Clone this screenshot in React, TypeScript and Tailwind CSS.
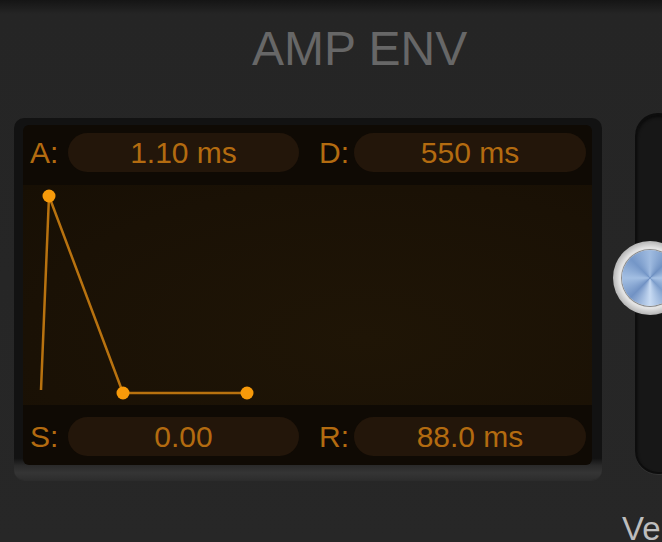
import React from "react";

const orange = "text-[#b36b10]";

function Field({ label, value, labelW, pillW }: { label: string; value: string; labelW: string; pillW: string }) {
  return (
    <div className="flex items-center">
      <div className={`${labelW} ${orange} text-[30px] leading-[30px]`}>{label}</div>
      <div
        className={`${pillW} h-[39px] rounded-full bg-[#23160a] flex items-center justify-center ${orange} text-[30px] leading-[30px]`}
      >
        {value}
      </div>
    </div>
  );
}

function Row({ a, b, cls }: { a: [string, string]; b: [string, string]; cls: string }) {
  return (
    <div className={`flex items-start pl-[7px] ${cls}`}>
      <Field label={a[0]} value={a[1]} labelW="w-[38px]" pillW="w-[231px]" />
      <div className="w-[20px]" />
      <Field label={b[0]} value={b[1]} labelW="w-[35px]" pillW="w-[232px]" />
    </div>
  );
}

function Graph() {
  return (
    <div className="h-[220px] bg-[radial-gradient(ellipse_at_60%_70%,#1f1506_0%,#1a1105_70%,#170f04_100%)]">
      <svg width="569" height="220" viewBox="0 0 569 220">
        <polyline
          points="18,205 26,11 100,208 224,208"
          fill="none"
          stroke="#b8720f"
          strokeWidth="2.5"
          strokeLinejoin="round"
        />
        <circle cx="26" cy="11" r="6.5" fill="#f79a0a" />
        <circle cx="100" cy="208" r="6.5" fill="#f79a0a" />
        <circle cx="224" cy="208" r="6.5" fill="#f79a0a" />
      </svg>
    </div>
  );
}

export default function App() {
  return (
    <div
      className="w-[662px] h-[542px] overflow-hidden flex items-start bg-[linear-gradient(to_bottom,#151515_0px,#252525_14px,#272727_100%)]"
      style={{ fontFamily: '"Liberation Sans", Arial, sans-serif' }}
    >
      <div className="w-[602px] pl-[14px] flex flex-col shrink-0">
        <div className="pl-[238px] pt-[25px] text-[48px] leading-[48px] text-[#676767] whitespace-nowrap">
          AMP ENV
        </div>
        <div className="mt-[45px] w-[588px] h-[362px] rounded-[10px] pl-[9px] pt-[7px] bg-[linear-gradient(to_bottom,#121212_0%,#121212_94%,#2a2a2a_96%,#353535_98%,#2d2d2d_100%)] shadow-[0_1px_0_#2c2c2c]">
          <div className="w-[569px] h-[340px] rounded-[6px] overflow-hidden bg-[#0f0a04] flex flex-col">
            <Row a={["A:", "1.10 ms"]} b={["D:", "550 ms"]} cls="h-[60px] pt-[8px]" />
            <Graph />
            <Row a={["S:", "0.00"]} b={["R:", "88.0 ms"]} cls="h-[60px] pt-[12px]" />
          </div>
        </div>
      </div>
      <div className="relative flex flex-col ml-[20px] shrink-0">
        <div className="ml-[13px] mt-[113px] w-[46px] h-[361px] rounded-full bg-[#171717] border-2 border-[#0d0d0d] shadow-[inset_0_2px_3px_#0a0a0a,0_1px_0_#333]" />
        <div className="mt-[38px] text-[33px] leading-[33px] text-[#bdbdbd] whitespace-nowrap">Velocity</div>
        <div className="absolute left-[-9px] top-[241px] w-[74px] h-[74px] rounded-full bg-[radial-gradient(circle,#e3e3e3_58%,#a9a9a9_74%,rgba(60,60,60,0)_100%)] flex items-center justify-center">
          <div className="w-[56px] h-[56px] rounded-full bg-[conic-gradient(from_0deg,#9fbbe0,#6f91c2,#a9c4e6,#7c9dcb,#c8dbf3,#7192c4,#a3bfe3,#7496c7,#9fbbe0)] shadow-[0_0_0_1px_#8a8a8a]" />
        </div>
      </div>
    </div>
  );
}
